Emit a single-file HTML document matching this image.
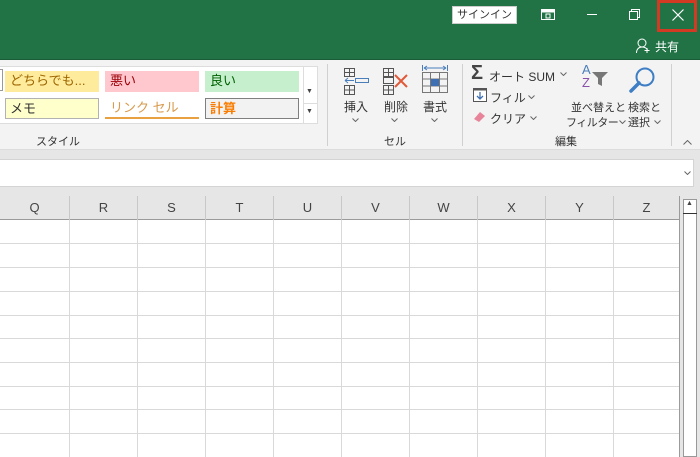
<!DOCTYPE html>
<html><head><meta charset="utf-8"><style>
*{margin:0;padding:0;box-sizing:border-box}
body{width:700px;height:457px;overflow:hidden;background:#e6e6e6;font-family:"Liberation Sans","Noto Sans CJK JP",sans-serif;position:relative;color:#333}
.a{position:absolute}
.t{font-size:12px;white-space:nowrap}
.col{position:absolute;top:196px;height:24px;border-right:1px solid #c8c8c8;font-size:13px;color:#444;text-align:center;line-height:24px}
.cv{position:absolute;width:7px;height:4px}
</style></head><body>
<svg width="0" height="0" style="position:absolute"><defs><path id="cv" d="M0.5 0.5L3.5 3.5L6.5 0.5" fill="none" stroke="#666"/></defs></svg>
<div class="a" style="left:0;top:0;width:700px;height:60px;background:#217346;border-bottom:1px solid #1a5c38"></div>
<div class="a t" style="left:452px;top:6px;width:65px;height:18px;background:#fff;border:1px solid #ccc;font-size:11px;line-height:16px;text-align:center;color:#333">サインイン</div>
<svg class="a" style="left:541px;top:9px" width="14" height="11"><rect x="0.5" y="0.5" width="13" height="10" fill="none" stroke="#fff"/><rect x="0.5" y="0.5" width="13" height="3" fill="#fff"/><rect x="5" y="5" width="4" height="4" fill="none" stroke="#fff"/></svg>
<div class="a" style="left:587px;top:14px;width:10px;height:1px;background:#fff"></div>
<svg class="a" style="left:629px;top:9px" width="11" height="11"><rect x="0.5" y="2.5" width="8" height="8" fill="none" stroke="#fff"/><path d="M2.5 2.5V0.5H10.5V8.5H8.5" fill="none" stroke="#fff"/></svg>
<div class="a" style="left:657px;top:0;width:40px;height:32px;border:3px solid #d23a24"></div>
<svg class="a" style="left:672px;top:9px" width="12" height="12"><path d="M0.5 0.5L11.5 11.5M11.5 0.5L0.5 11.5" stroke="#fff" stroke-width="1.2"/></svg>
<svg class="a" style="left:636px;top:38px" width="16" height="16"><circle cx="6" cy="5" r="4" fill="none" stroke="#fff"/><path d="M0.5 15c0-4 2.5-6 5.5-6s5 1.5 5.5 3M11 10v5M8.5 12.5h5" fill="none" stroke="#fff"/></svg>
<div class="a t" style="left:655px;top:38px;color:#fff;font-size:12px">共有</div>

<div class="a" style="left:0;top:60px;width:700px;height:90px;background:#f3f3f3;border-bottom:1px solid #dcdcdc"></div>
<div class="a" style="left:0;top:66px;width:318px;height:58px;background:#fff;border:1px solid #ddd;border-left:none"></div>
<div class="a" style="left:0;top:69px;width:3px;height:22px;border:1px solid #999;border-left:none"></div>
<div class="a t" style="left:5px;top:71px;width:94px;height:21px;background:#ffeb9c;color:#9c6500;font-size:13px;line-height:20px;padding-left:5px">どちらでも...</div>
<div class="a t" style="left:105px;top:71px;width:94px;height:21px;background:#ffc7ce;color:#9c0006;font-size:13px;line-height:20px;padding-left:5px">悪い</div>
<div class="a t" style="left:205px;top:71px;width:94px;height:21px;background:#c6efce;color:#006100;font-size:13px;line-height:20px;padding-left:5px">良い</div>
<div class="a t" style="left:5px;top:98px;width:94px;height:21px;background:#ffffcc;border:1px solid #b2b2b2;font-size:13px;line-height:19px;padding-left:4px">メモ</div>
<div class="a t" style="left:105px;top:98px;width:94px;height:21px;border-bottom:2px solid #e8a040;color:#d89a4c;font-size:13px;line-height:19px;padding-left:5px">リンク セル</div>
<div class="a t" style="left:205px;top:98px;width:94px;height:21px;background:#f2f2f2;border:1px solid #7f7f7f;color:#fa7d00;font-size:13px;font-weight:bold;line-height:19px;padding-left:4px">計算</div>
<div class="a" style="left:303px;top:66px;width:15px;height:58px;border-left:1px solid #ddd"></div>
<div class="a t" style="left:306px;top:88px;font-size:7px;color:#444">▼</div>
<div class="a t" style="left:306px;top:108px;font-size:7px;color:#444">▼</div>
<div class="a" style="left:304px;top:103px;width:14px;height:1px;background:#ddd"></div>
<div class="a t" style="left:36px;top:133px;font-size:11px">スタイル</div>
<div class="a" style="left:327px;top:64px;width:1px;height:82px;background:#d0d0d0"></div>

<svg class="a" style="left:342px;top:67px" width="28" height="28"><g fill="none" stroke="#555"><rect x="2.5" y="1.5" width="10" height="8"/><path d="M2.5 5.5h10M7.5 1.5v8"/><rect x="2.5" y="18.5" width="10" height="9"/><path d="M2.5 23h10M7.5 18.5v9"/><rect x="13.5" y="11.5" width="13" height="4" stroke="#4a7ebb"/></g><path d="M3 13.5h9M3 13.5l3-2.5M3 13.5l3 2.5" stroke="#4a7ebb" fill="none"/></svg>
<svg class="a" style="left:381px;top:67px" width="30" height="28"><g fill="none" stroke="#555"><rect x="2.5" y="1.5" width="10" height="8"/><path d="M2.5 5.5h10M7.5 1.5v8"/><rect x="2.5" y="10.5" width="10" height="6"/><rect x="2.5" y="18.5" width="10" height="9"/><path d="M2.5 23h10M7.5 18.5v9"/></g><path d="M14 8l12 12M26 8L14 20" stroke="#e05a3a" stroke-width="2"/></svg>
<svg class="a" style="left:421px;top:65px" width="28" height="30"><path d="M3 3h22M3 3l3-2M3 3l3 2M25 3l-3-2M25 3l-3 2M1.5 0v6M26.5 0v6" stroke="#4a7ebb" fill="none"/><g fill="none" stroke="#777"><rect x="1.5" y="7.5" width="25" height="20"/><path d="M1.5 14h25M1.5 21h25M9.5 7.5v20M18.5 7.5v20"/></g><rect x="10" y="14" width="8" height="7" fill="#3d6fb2"/></svg>
<div class="a t" style="left:344px;top:98px">挿入</div>
<div class="a t" style="left:384px;top:98px">削除</div>
<div class="a t" style="left:423px;top:98px">書式</div>
<svg class="cv" style="left:352px;top:118px"><use href="#cv"/></svg>
<svg class="cv" style="left:391px;top:118px"><use href="#cv"/></svg>
<svg class="cv" style="left:431px;top:118px"><use href="#cv"/></svg>
<div class="a t" style="left:384px;top:133px;font-size:11px">セル</div>
<div class="a" style="left:462px;top:64px;width:1px;height:82px;background:#d0d0d0"></div>

<div class="a t" style="left:471px;top:62px;font-size:20px;font-weight:bold;color:#444">Σ</div>
<div class="a t" style="left:489px;top:68px;font-size:12px">オート SUM</div>
<svg class="cv" style="left:560px;top:72px"><use href="#cv"/></svg>
<svg class="a" style="left:473px;top:88px" width="14" height="14"><rect x="0.5" y="0.5" width="13" height="13" fill="#fff" stroke="#555"/><rect x="0.5" y="0.5" width="13" height="2" fill="#555"/><path d="M7 4v7M4 8l3 3 3-3" stroke="#3d6fb2" fill="none" stroke-width="1.3"/></svg>
<div class="a t" style="left:490px;top:89px">フィル</div>
<svg class="cv" style="left:528px;top:95px"><use href="#cv"/></svg>
<svg class="a" style="left:472px;top:110px" width="14" height="12"><path d="M2 9l6-7 5 4-6 6z" fill="#e8849a"/></svg>
<div class="a t" style="left:490px;top:110px">クリア</div>
<svg class="cv" style="left:530px;top:116px"><use href="#cv"/></svg>
<div class="a t" style="left:582px;top:64px;font-size:13px;color:#4a7ebb;line-height:12px">A</div>
<div class="a t" style="left:582px;top:77px;font-size:13px;color:#8a4fa8;line-height:12px">Z</div>
<svg class="a" style="left:591px;top:71px" width="18" height="16"><path d="M1 1h16l-6 6v8l-4-2V7z" fill="#777"/></svg>
<svg class="a" style="left:628px;top:66px" width="28" height="28"><circle cx="17" cy="11" r="8.5" fill="none" stroke="#3d7ec4" stroke-width="2"/><path d="M11 17l-8 8" stroke="#3d7ec4" stroke-width="3.5" stroke-linecap="round"/></svg>
<div class="a t" style="left:571px;top:99px;font-size:11px">並べ替えと</div>
<div class="a t" style="left:566px;top:114px;font-size:11px;letter-spacing:-0.5px">フィルター</div>
<svg class="cv" style="left:619px;top:120px"><use href="#cv"/></svg>
<div class="a t" style="left:628px;top:99px;font-size:11px">検索と</div>
<div class="a t" style="left:628px;top:114px;font-size:11px">選択</div>
<svg class="cv" style="left:654px;top:120px"><use href="#cv"/></svg>
<div class="a t" style="left:555px;top:133px;font-size:11px">編集</div>
<div class="a" style="left:671px;top:64px;width:1px;height:82px;background:#d0d0d0"></div>
<svg class="a" style="left:683px;top:140px" width="9" height="5"><path d="M0.5 4.5L4.5 0.5L8.5 4.5" fill="none" stroke="#666"/></svg>

<div class="a" style="left:0;top:159px;width:694px;height:28px;background:#fff;border:1px solid #d4d4d4;border-left:none"></div>
<svg class="cv" style="left:684px;top:171px"><use href="#cv"/></svg>

<div class="a" style="left:0;top:196px;width:680px;height:261px;background:#fff"></div>
<div class="a" style="left:0;top:196px;width:680px;height:24px;background:#e6e6e6;border-bottom:1px solid #9b9b9b"></div>
<div class="col" style="left:0;width:70px">Q</div>
<div class="col" style="left:70px;width:68px">R</div>
<div class="col" style="left:138px;width:68px">S</div>
<div class="col" style="left:206px;width:68px">T</div>
<div class="col" style="left:274px;width:68px">U</div>
<div class="col" style="left:342px;width:68px">V</div>
<div class="col" style="left:410px;width:68px">W</div>
<div class="col" style="left:478px;width:68px">X</div>
<div class="col" style="left:546px;width:68px">Y</div>
<div class="col" style="left:614px;width:66px;border-right:1px solid #9b9b9b">Z</div>
<svg class="a" style="left:0;top:220px" width="680" height="237">
<g stroke="#d9d9d9" stroke-width="1">
<path d="M0 23.5H680M0 47.5H680M0 71.5H680M0 95.5H680M0 118.5H680M0 142.5H680M0 166.5H680M0 189.5H680M0 213.5H680"/>
<path d="M69.5 0V237M137.5 0V237M205.5 0V237M273.5 0V237M341.5 0V237M409.5 0V237M477.5 0V237M545.5 0V237M613.5 0V237"/>
</g><path d="M679.5 0V237" stroke="#9b9b9b"/></svg>
<div class="a" style="left:683px;top:199px;width:14px;height:258px;background:#fff;border:1px solid #999"></div>
<div class="a" style="left:683px;top:213px;width:14px;height:1px;background:#333"></div>
<div class="a t" style="left:686px;top:200px;font-size:7px;color:#444">▲</div>
</body></html>
